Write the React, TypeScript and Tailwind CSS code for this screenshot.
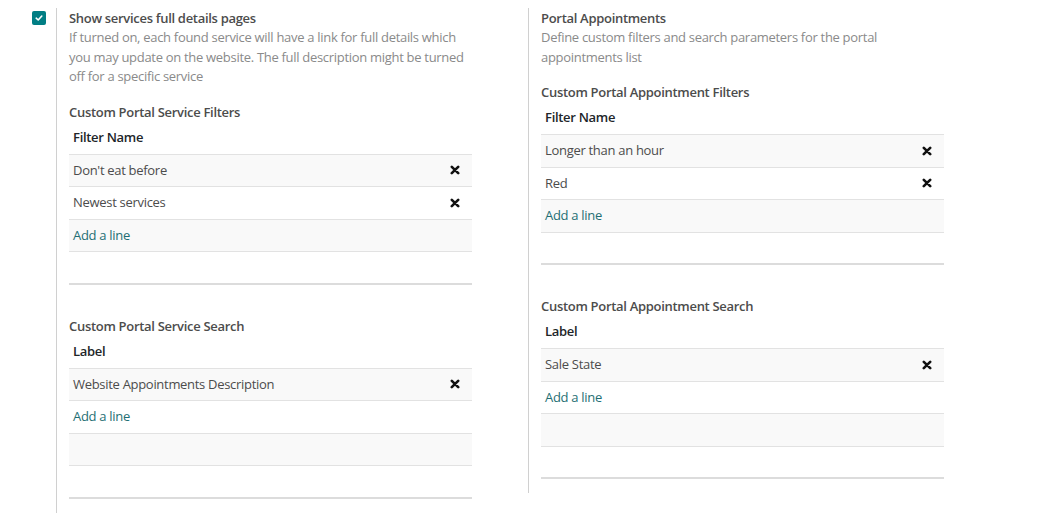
import React from "react";

type Row = { label: string };

const font = { fontFamily: '"Open Sans", "Noto Sans", sans-serif' };

function RemoveIcon() {
    return (
        <svg width="10" height="10" viewBox="0 0 10 10" className="shrink-0">
            <path d="M1.8 1.8 L8.2 8.2 M8.2 1.8 L1.8 8.2" stroke="#111" strokeWidth="2.6" strokeLinecap="round" />
        </svg>
    );
}

function LineTable({ header, rows }: { header: string; rows: Row[] }) {
    // four body lines are always shown, "Add a line" included
    const fillers = Math.max(0, 3 - rows.length);
    const stripe = (i: number) => (i % 2 === 0 ? "bg-[#f9f9f9]" : "bg-white");
    const total = rows.length + 1 + fillers;
    const edge = (i: number) => (i === total - 1 ? "border-b-2 border-[#dcdcdc]" : "border-b border-[#e2e2e2]");

    return (
        <div className="w-[403px]">
            <div className="h-[33px] flex items-center px-1 border-b border-[#e2e2e2] text-[13px] font-semibold text-[#212529]">
                {header}
            </div>
            {rows.map((row, i) => (
                <div
                    key={row.label}
                    className={`h-[32.5px] flex items-center justify-between pl-1 pr-3 text-[13px] text-[#4c4c4c] ${edge(i)} ${stripe(i)}`}
                >
                    <span>{row.label}</span>
                    <RemoveIcon />
                </div>
            ))}
            <div className={`h-[32.5px] flex items-center px-1 text-[13px] text-[#1f6f74] ${edge(rows.length)} ${stripe(rows.length)}`}>
                Add a line
            </div>
            {Array.from({ length: fillers }).map((_, i) => (
                <div key={i} className={`h-[32.5px] ${edge(rows.length + 1 + i)} ${stripe(rows.length + 1 + i)}`} />
            ))}
        </div>
    );
}

function SectionLabel({ children }: { children: React.ReactNode }) {
    return <div className="text-[13px] font-semibold text-[#4c4c4c] leading-[19px]">{children}</div>;
}

export default function App() {
    return (
        <div className="w-[1050px] h-[526px] bg-white flex items-start pl-6 tracking-[-0.3px]" style={font}>
            {/* full details pages setting */}
            <div className="w-[472px] flex">
                <div className="w-8 pt-[11px] pl-2">
                    <div className="w-[14px] h-[14px] rounded-[2px] bg-[#017e84] flex items-center justify-center">
                        <svg width="8" height="8" viewBox="0 0 8 8">
                            <path d="M1.2 4.2 L3.2 6 L6.8 2" stroke="#fff" strokeWidth="1.6" fill="none" strokeLinecap="round" strokeLinejoin="round" />
                        </svg>
                    </div>
                </div>
                <div className="mt-2 border-l border-[#d0d0d0] pl-3 pb-[14px] pt-[1px]">
                    <SectionLabel>Show services full details pages</SectionLabel>
                    <p className="text-[13px] leading-[19.5px] text-[#8a8a8a] w-[403px]">
                        If turned on, each found service will have a link for full details which you may update on the website. The full description might be turned off for a specific service
                    </p>
                    <div className="mt-4">
                        <SectionLabel>Custom Portal Service Filters</SectionLabel>
                        <LineTable header="Filter Name" rows={[{ label: "Don't eat before" }, { label: "Newest services" }]} />
                    </div>
                    <div className="mt-8">
                        <SectionLabel>Custom Portal Service Search</SectionLabel>
                        <LineTable header="Label" rows={[{ label: "Website Appointments Description" }]} />
                    </div>
                </div>
            </div>

            {/* portal appointments setting */}
            <div className="w-[472px] flex">
                <div className="w-8" />
                <div className="mt-2 border-l border-[#d0d0d0] pl-3 pb-[14px] pt-[1px]">
                    <SectionLabel>Portal Appointments</SectionLabel>
                    <p className="text-[13px] leading-[19.5px] text-[#8a8a8a] w-[403px] pr-10">
                        Define custom filters and search parameters for the portal appointments list
                    </p>
                    <div className="mt-4">
                        <SectionLabel>Custom Portal Appointment Filters</SectionLabel>
                        <LineTable header="Filter Name" rows={[{ label: "Longer than an hour" }, { label: "Red" }]} />
                    </div>
                    <div className="mt-8">
                        <SectionLabel>Custom Portal Appointment Search</SectionLabel>
                        <LineTable header="Label" rows={[{ label: "Sale State" }]} />
                    </div>
                </div>
            </div>
        </div>
    );
}
